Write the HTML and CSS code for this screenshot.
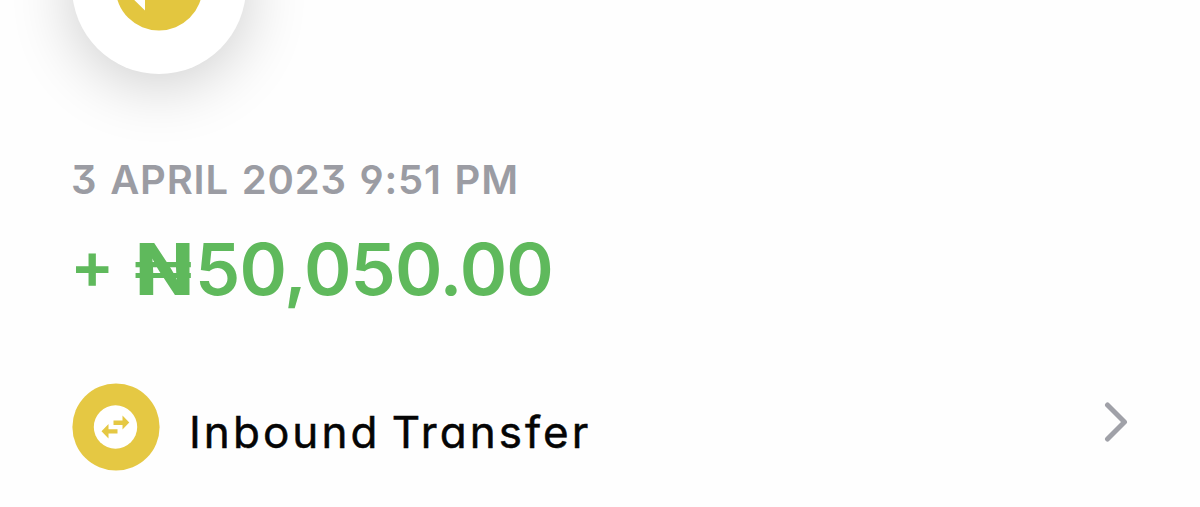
FILE: index.html
```html
<!DOCTYPE html>
<html>
<head>
  <meta charset="utf-8" />
  <title>Transaction</title>
  <meta name="viewport" content="width=device-width, initial-scale=1">
  <link rel="stylesheet" href="styles.css">
</head>
<body>
  <div class="transaction">
    <div class="avatar">
      <svg width="88" height="88" viewBox="0 0 88 88">
        <circle cx="44" cy="44" r="43.500" fill="#e3c63f" />
        <path d="M8 46L30 24.500V37H50V54H30V67.500Z" fill="#fff" />
      </svg>
    </div>
    <div class="date">3 APRIL 2023 9:51 PM</div>
    <div class="amount"><span class="sign">+</span><span class="naira">₦</span><span class="value">50,050.00</span></div>
    <div class="category">
      <svg class="icon" width="88" height="88" viewBox="0 0 88 88">
        <circle cx="44" cy="44" r="43.600" fill="#e5c843" />
        <circle cx="43.500" cy="44" r="21.700" fill="#fff" />
        <path d="M57.300 39.500L50.500 32.500V37.500H41.500V42H50.500V46.500ZM29.500 48.300L36.500 41V46.200H45.500V50.600H36.500V55.500Z" fill="#e5c843" />
      </svg>
      <span class="name">Inbound Transfer</span>
      <svg class="chevron" width="24" height="40" viewBox="0 0 24 40">
        <path d="M3.500 3L20.500 20L3.500 37" fill="none" stroke="#a0a1a8" stroke-width="5" stroke-linecap="round" stroke-linejoin="round" />
      </svg>
    </div>
  </div>
</body>
</html>
```
FILE: styles.css
```css
html, body {
  margin: 0;
  padding: 0;
}
body {
  height: 507px;
  overflow: hidden;
  background: #fefefe;
  font-family: Inter, "Liberation Sans", sans-serif;
  font-feature-settings: "cv11", "ss01", "cv09";
}
.transaction {
  padding: 0 72px;
}
.avatar {
  display: flex;
  align-items: center;
  justify-content: center;
  width: 174px;
  height: 174px;
  margin-top: -100px;
  border-radius: 50%;
  background: #fff;
  box-shadow: 0 10px 64px rgba(0, 0, 0, 0.2);
}
.date {
  margin-top: 81px;
  margin-left: -1px;
  line-height: 50px;
  font-size: 40px;
  font-weight: 560;
  letter-spacing: 0.800px;
  word-spacing: 2px;
  color: #9b9ca3;
  white-space: nowrap;
}
.amount {
  display: flex;
  margin-top: 24px;
  line-height: 80px;
  font-size: 72px;
  font-weight: 600;
  color: #5fb95c;
  white-space: nowrap;
}
.sign {
  width: 64px;
  margin-top: -4px;
  margin-left: -2px;
  font-size: 66px;
}
.naira {
  width: 61px;
  font-weight: 800;
  transform: scaleX(1.060);
  transform-origin: 40% 50%;
  margin-left: 2px;
  margin-right: -2px;
}
.value {
  letter-spacing: -0.900px;
}
.category {
  display: flex;
  align-items: center;
  margin-top: 74px;
}
.name {
  flex: 1;
  margin-left: 29px;
  padding-top: 10px;
  font-size: 44px;
  letter-spacing: 3.050px;
  word-spacing: -4px;
  color: #050505;
  -webkit-text-stroke: 0.500px #050505;
}
.chevron {
  margin-top: -11px;
}
```
